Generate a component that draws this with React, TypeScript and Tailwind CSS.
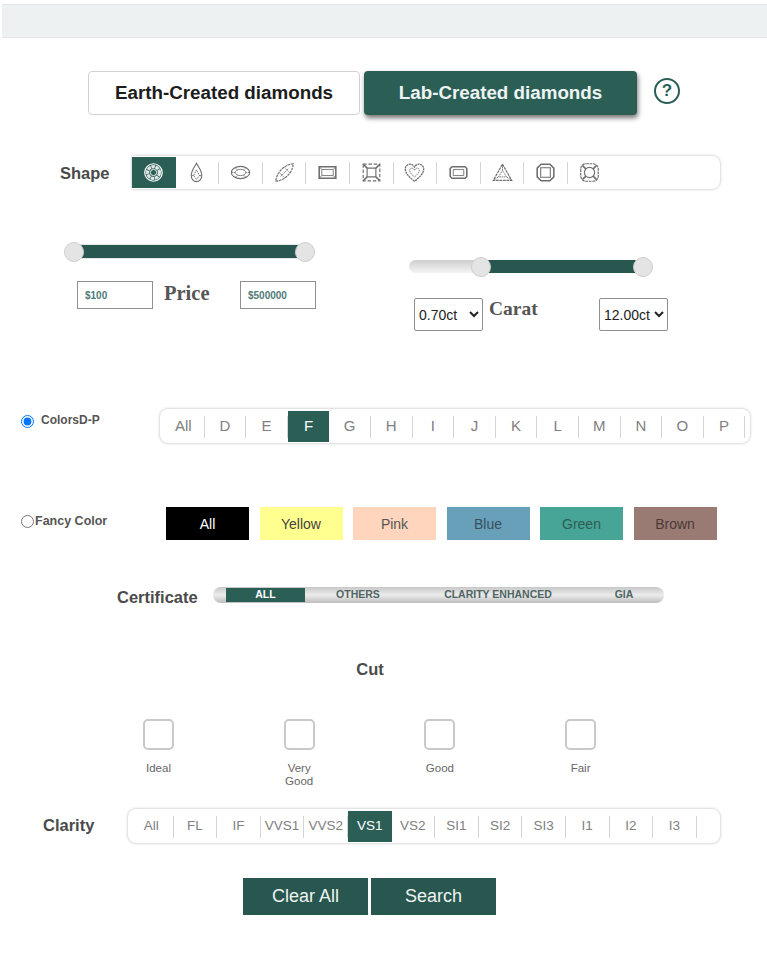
import type { ReactNode } from "react";

const sans = { fontFamily: '"Liberation Sans", Arial, sans-serif' };

const colorGrades = ["All", "D", "E", "F", "G", "H", "I", "J", "K", "L", "M", "N", "O", "P"];
const clarityGrades = ["All", "FL", "IF", "VVS1", "VVS2", "VS1", "VS2", "SI1", "SI2", "SI3", "I1", "I2", "I3"];
const swatches = [
  { label: "All", cls: "bg-black text-white" },
  { label: "Yellow", cls: "bg-[#ffff8f] text-[#444]" },
  { label: "Pink", cls: "bg-[#ffd5bd] text-[#555]" },
  { label: "Blue", cls: "bg-[#68a0ba] text-[#38505c]" },
  { label: "Green", cls: "bg-[#46a596] text-[#2f5c55]" },
  { label: "Brown", cls: "bg-[#9a7b74] text-[#4a3a37]" },
];

const shapes: ReactNode[] = [
  <g key="round">
    <circle cx="12" cy="12" r="10" strokeWidth="1.400" />
    <circle cx="12" cy="12" r="6.800" strokeWidth="3.600" strokeDasharray="4 0.800" opacity="0.85" />
    <circle cx="12" cy="12" r="3.600" strokeWidth="1" />
  </g>,
  <g key="pear">
    <path d="M12 1.500C10 5.500 6 9.500 6 15.500a6 7 0 0 0 12 0C18 9.500 14 5.500 12 1.500Z" strokeWidth="1.300" />
    <path d="M12 9 8.700 15.500 12 20l3.300-4.500ZM8.700 15.500H6M15.300 15.500H18" strokeDasharray="1.800 0.700" />
  </g>,
  <g key="oval">
    <ellipse cx="12" cy="12" rx="10.500" ry="7" strokeWidth="1.300" />
    <ellipse cx="12" cy="12" rx="6" ry="3.600" />
    <path d="M1.500 12H6M18 12h4.500M6 6.500 8.500 9M18 6.500 15.500 9M6 17.500 8.500 15M18 17.500 15.500 15" strokeDasharray="1.800 0.700" />
  </g>,
  <g key="marquise">
    <path d="M22 2C13 2.500 3 11 2 22c9.500-.5 19.500-9.500 20-20Z" strokeWidth="1.300" strokeDasharray="3 0.800" />
    <path d="M7.500 16.500 16.500 7.500M6 12l6 6M12 6l6 6" strokeDasharray="1.800 0.700" />
  </g>,
  <g key="emerald">
    <path d="M2.500 5.500h19v13h-19Z" strokeWidth="1.800" />
    <path d="M5.500 8.500h13v7h-13ZM2.500 5.500l3 3M21.500 5.500l-3 3M2.500 18.500l3-3M21.500 18.500l-3-3" />
  </g>,
  <g key="princess">
    <path d="M2.500 2.500h19v19h-19Z" strokeDasharray="4 2" strokeWidth="1.300" />
    <path d="M7 7h10v10H7Z" strokeWidth="1.300" />
    <path d="M2.500 2.500 7 7M21.500 2.500 17 7M2.500 21.500 7 17M21.500 21.500 17 17" strokeWidth="1.800" />
  </g>,
  <g key="heart">
    <path d="M12 22C7 18 1.500 13.500 1.500 8c0-3 2.500-5.500 5.200-5.500 2.200 0 4.100 1.100 5.300 3.300 1.200-2.200 3.100-3.300 5.300-3.300 2.700 0 5.200 2.500 5.200 5.500 0 5.500-5.500 10-10.500 14Z" strokeDasharray="2.400 0.700" strokeWidth="1.500" />
    <path d="M12 17c-2.500-2-5.500-4.500-5.500-7.500 0-1.500 1-2.500 2.200-2.500 1.500 0 2.700 1 3.300 2.500.6-1.500 1.800-2.500 3.300-2.500 1.200 0 2.200 1 2.200 2.500 0 3-3 5.500-5.500 7.500Z" strokeDasharray="1.800 0.700" />
  </g>,
  <g key="radiant">
    <path d="M4.500 5.500h15l2 2v9l-2 2h-15l-2-2v-9Z" strokeWidth="1.800" />
    <path d="M6 8.500h12v7H6Z" />
  </g>,
  <g key="trillion">
    <path d="M12 2.500 22.500 21H1.500Z" strokeWidth="1.400" strokeDasharray="3.200 0.800" />
    <path d="M12 9.500l4.500 7.500h-9ZM12 2.500v7M22.500 21 16.500 17M1.500 21l6-4" strokeDasharray="1.800 0.700" />
  </g>,
  <g key="cushion">
    <path d="M7 2.500h10l4.500 4.500v10L17 21.500H7L2.500 17V7Z" strokeWidth="1.800" />
    <path d="M6.500 6.500h11v11h-11Z" strokeWidth="1.200" />
  </g>,
  <g key="asscher">
    <path d="M8 2h8a6 6 0 0 1 6 6v8a6 6 0 0 1-6 6H8a6 6 0 0 1-6-6V8a6 6 0 0 1 6-6Z" strokeWidth="1.400" strokeDasharray="3.200 0.800" />
    <circle cx="12" cy="12" r="5.800" strokeWidth="1.300" />
    <path d="M4 4l3.800 3.800M20 4l-3.800 3.800M4 20l3.800-3.800M20 20l-3.800-3.800" strokeWidth="2" />
  </g>,
];

function SegmentBar({
  items,
  active,
  barCls,
  cellCls,
}: {
  items: string[];
  active: string;
  barCls: string;
  cellCls: string;
}) {
  return (
    <div className={`flex h-[34px] items-stretch rounded-lg bg-white pb-[1px] pt-[2px] shadow-[0_0_3px_rgba(0,0,0,0.3)] ${barCls}`}>
      {items.map((item) => (
        <div
          key={item}
          className={`flex shrink-0 items-center justify-center ${cellCls} ${
            item === active ? "bg-[#2b5f56] text-white" : "text-[#808080]"
          }`}
        >
          <span
            className={`flex h-[22px] w-full items-center justify-center ${
              item === active ? "" : "border-r border-[#d4d4d4]"
            }`}
          >
            {item}
          </span>
        </div>
      ))}
    </div>
  );
}

function Thumb({ cls }: { cls: string }) {
  return (
    <span className={`absolute top-1/2 h-[20px] w-[20px] -translate-x-1/2 -translate-y-1/2 rounded-full border border-[#cfcfcf] bg-[#e4e4e4] ${cls}`} />
  );
}

function TextBox({ value }: { value: string }) {
  return (
    <input
      readOnly
      defaultValue={value}
      className="h-[28px] w-[76px] border border-[#8f8f8f] bg-white px-[7px] text-[10px] font-bold text-[#4f7a78] outline-none"
    />
  );
}

function CaratSelect({ value }: { value: string }) {
  return (
    <select
      defaultValue={value}
      className="h-[33px] w-[69px] rounded-[2px] border border-[#8f8f8f] bg-white text-[14px] text-[#222]"
    >
      <option>{value}</option>
    </select>
  );
}

function CutOption({ label }: { label: ReactNode }) {
  return (
    <div className="flex w-[31px] flex-col items-center">
      <span className="h-[31px] w-[31px] shrink-0 rounded-[5px] border-2 border-[#c9c9c9] bg-white" />
      <span className="mt-[12px] w-[60px] text-center text-[11.500px] leading-[13px] text-[#666]">{label}</span>
    </div>
  );
}

export default function App() {
  return (
    <div className="h-[963px] w-[767px] overflow-hidden bg-white" style={sans}>
      <div className="ml-[2px] mt-[4px] h-[34px] border-y border-[#e3e6e6] bg-[#eef1f1]" />

      {/* earth / lab switch */}
      <div className="ml-[88px] mt-[33px] flex h-[44px] items-center">
        <button className="h-full w-[272px] rounded-[4px] border border-[#d2d2d2] bg-white text-[18.800px] font-bold text-[#1c1c1c]">
          Earth-Created diamonds
        </button>
        <button className="ml-[4px] h-full w-[273px] rounded-[4px] bg-[#2b5f56] text-[18.800px] font-bold text-[#eef4f2] shadow-[1px_3px_5px_rgba(0,0,0,0.55)]">
          Lab-Created diamonds
        </button>
        <span className="mb-[4px] ml-[17px] flex h-[26px] w-[26px] items-center justify-center rounded-full border-2 border-[#2b5f56] text-[17px] font-bold text-[#2b5f56]">
          ?
        </span>
      </div>

      {/* shape */}
      <div className="mt-[41px] flex h-[33px] items-center">
        <span className="ml-[60px] mt-[2px] w-[72px] text-[16.500px] font-bold text-[#4a4a4a]">Shape</span>
        <div className="flex h-full w-[588px] items-stretch rounded-r-lg bg-white py-[1px] shadow-[0_0_3px_rgba(0,0,0,0.3)]">
          {shapes.map((icon, i) => (
            <div
              key={i}
              className={`flex w-[43.600px] shrink-0 items-center justify-center ${i === 0 ? "bg-[#2b5f56] text-white" : "text-[#6f6f6f]"}`}
            >
              <span
                className={`flex h-[22px] w-full items-center justify-center ${
                  i === 0 || i === shapes.length - 1 ? "" : "border-r border-[#d4d4d4]"
                }`}
              >
                <svg viewBox="0 0 24 24" fill="none" stroke="currentColor" strokeWidth="1" className="h-[21px] w-[21px]">
                  {icon}
                </svg>
              </span>
            </div>
          ))}
        </div>
      </div>

      {/* price and carat */}
      <div className="flex">
        <div className="ml-[64px] mt-[56px] w-[262px]">
          <div className="relative ml-[10px] h-[13px] w-[231px] bg-[#28574f] shadow-[0_0_1px_#777]">
            <Thumb cls="left-0" />
            <Thumb cls="left-full" />
          </div>
          <div className="ml-[13px] mt-[23px] flex h-[28px] items-center">
            <TextBox value="$100" />
            <span className="mb-[4px] ml-[11px] w-[76px] font-['Liberation_Serif',serif] text-[20.500px] font-bold leading-[22px] text-[#555]">
              Price
            </span>
            <TextBox value="$500000" />
          </div>
        </div>
        <div className="ml-[83px] mt-[71px] w-[262px]">
          <div className="relative h-[13px] w-[234px] rounded-l-full bg-gradient-to-b from-[#cfcfcf] to-[#f4f4f4]">
            <div className="absolute inset-y-0 left-[72px] right-0 bg-[#28574f]" />
            <Thumb cls="left-[72px]" />
            <Thumb cls="left-full" />
          </div>
          <div className="ml-[5px] mt-[25px] flex items-start">
            <CaratSelect value="0.70ct" />
            <span className="ml-[6px] w-[110px] font-['Liberation_Serif',serif] text-[19.500px] font-bold leading-[21px] text-[#555]">
              Carat
            </span>
            <CaratSelect value="12.00ct" />
          </div>
        </div>
      </div>

      {/* colors */}
      <div className="mt-[78px] flex items-start">
        <label className="ml-[21px] mt-[5px] flex w-[139px] items-start text-[12px] font-bold text-[#555]">
          <input type="radio" name="color-mode" defaultChecked className="mt-[1px] h-[13px] w-[13px]" />
          <span className="-mt-[3px] ml-[7px]">ColorsD-P</span>
        </label>
        <SegmentBar items={colorGrades} active="F" barCls="w-[590px] pl-[3px]" cellCls="w-[41.600px] text-[15px]" />
      </div>

      {/* fancy colors */}
      <div className="mt-[64px] flex h-[33px] items-center">
        <label className="-mt-[5px] ml-[21px] flex w-[145px] items-center text-[12.500px] font-bold text-[#555]">
          <input type="radio" name="color-mode" className="h-[13px] w-[13px]" />
          <span className="ml-[1px]">Fancy Color</span>
        </label>
        <div className="flex h-full gap-[10.500px]">
          {swatches.map((s) => (
            <div key={s.label} className={`flex w-[83px] items-center justify-center pt-[1px] text-[14px] ${s.cls}`}>
              {s.label}
            </div>
          ))}
        </div>
      </div>

      {/* certificate */}
      <div className="mt-[47px] flex h-[16px] items-center">
        <span className="ml-[117px] mt-[4px] w-[96px] text-[16.500px] font-bold text-[#4a4a4a]">Certificate</span>
        <div className="flex h-full w-[451px] items-center rounded-full bg-gradient-to-b from-[#c8c8c8] via-[#ececec] to-[#bdbdbd] pl-[13px] text-[10.500px] font-bold text-[#4f6562]">
          <span className="flex h-[14px] w-[79px] items-center justify-center bg-[#2b5f56] text-white">ALL</span>
          <span className="w-[106px] text-center">OTHERS</span>
          <span className="w-[174px] text-center">CLARITY ENHANCED</span>
          <span className="w-[78px] text-center">GIA</span>
        </div>
      </div>

      {/* cut */}
      <p className="ml-[170px] mt-[57px] w-[400px] text-center text-[16.500px] font-bold leading-[18px] text-[#4a4a4a]">Cut</p>
      <div className="ml-[143px] mt-[41px] flex h-[70px] gap-[109.700px]">
        <CutOption label="Ideal" />
        <CutOption
          label={
            <>
              Very
              <br />
              Good
            </>
          }
        />
        <CutOption label="Good" />
        <CutOption label="Fair" />
      </div>

      {/* clarity */}
      <div className="mt-[20px] flex items-center">
        <span className="-mt-[1px] ml-[43px] w-[85px] text-[16.500px] font-bold text-[#4a4a4a]">Clarity</span>
        <SegmentBar items={clarityGrades} active="VS1" barCls="w-[592px] pl-[2px]" cellCls="w-[43.600px] text-[13.500px]" />
      </div>

      {/* actions */}
      <div className="ml-[243px] mt-[35px] flex h-[37px] gap-[3px]">
        <button className="w-[125px] bg-[#28574f] text-[18px] text-[#eef4f2]">Clear All</button>
        <button className="w-[125px] bg-[#28574f] text-[18px] text-[#eef4f2]">Search</button>
      </div>
    </div>
  );
}
